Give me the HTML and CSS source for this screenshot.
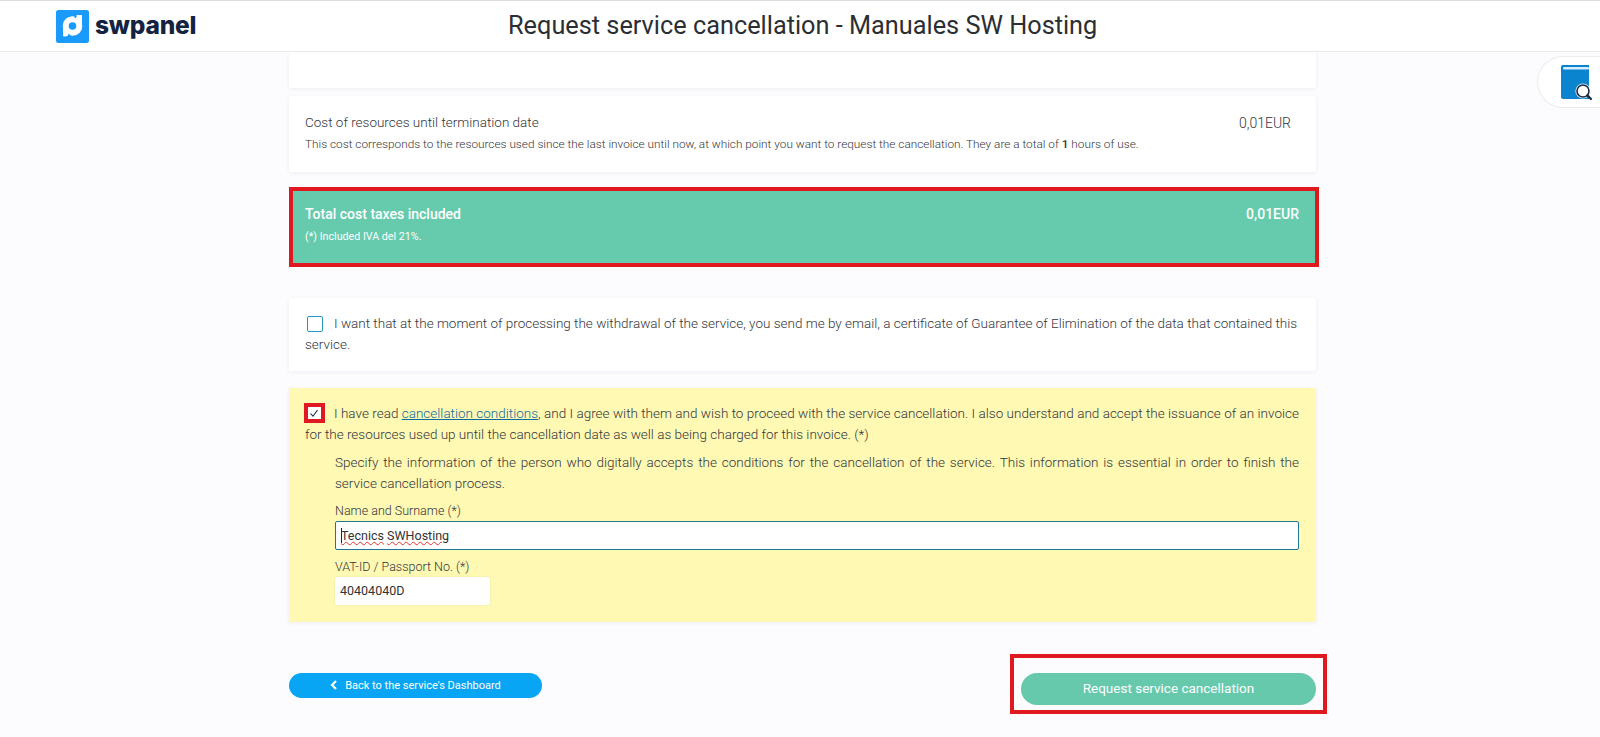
FILE: index.html
```html
<!DOCTYPE html>
<html lang="en">
<head>
<meta charset="utf-8">
<title>Request service cancellation - Manuales SW Hosting</title>
<link rel="stylesheet" href="styles.css">
</head>
<body>
<header class="topbar">
  <div class="brand">
    <svg class="brand-icon" viewBox="0 0 33 33" aria-hidden="true">
      <rect width="33" height="33" rx="2.5" fill="#1a9bfc"/>
      <circle cx="16.5" cy="16" r="9.8" fill="#fff"/>
      <path d="M20.5 5H26v11h-5.5zM7 16h5.5v11l-3.5 0-2-1z" fill="#fff"/>
      <path d="M7 27h6.2l1.8-1.8" fill="#1a9bfc"/>
      <circle cx="16.5" cy="16" r="3.8" fill="#1a9bfc"/>
      <path d="M20 5.5l-1 2.6M13.2 24l-1 3" stroke="#1a9bfc" stroke-width="1.4"/>
    </svg>
    <span class="brand-name">swpanel</span>
  </div>
  <h1 class="page-title">Request service cancellation - Manuales SW Hosting</h1>
</header>

<aside class="help-tab">
  <svg class="help-icon" viewBox="0 0 32 36" aria-hidden="true">
    <path d="M2 0h26v34H2a2 2 0 0 1-2-2V2a2 2 0 0 1 2-2z" fill="#0b84d0"/>
    <rect x="2" y="2" width="26" height="2.6" rx="1.3" fill="#d7edf9"/>
    <circle cx="22" cy="26" r="7.6" fill="#fff" opacity=".9"/>
    <circle cx="22" cy="26" r="6" fill="#fff" stroke="#1c2c3f" stroke-width="1.6"/>
    <path d="M26.4 30.4l3.6 3.6" stroke="#1c2c3f" stroke-width="2.2" stroke-linecap="round"/>
  </svg>
</aside>

<main class="content">
  <div class="card card-stub"></div>

  <section class="card cost-card">
    <div class="cost-text">
      <div class="cost-title">Cost of resources until termination date</div>
      <p class="cost-note">This cost corresponds to the resources used since the last invoice until now, at which point you want to request the cancellation. They are a total of <b class="strong">1</b> hours of use.</p>
    </div>
    <div class="cost-value">0,01EUR</div>
  </section>

  <section class="total-card">
    <div>
      <div class="total-title">Total cost taxes included</div>
      <p class="total-note">(*) Included IVA del 21%.</p>
    </div>
    <div class="total-value">0,01EUR</div>
  </section>

  <section class="card guarantee-card">
    <p class="body-text"><span class="check check-empty"></span>I want that at the moment of processing the withdrawal of the service, you send me by email, a certificate of Guarantee of Elimination of the data that contained this service.</p>
  </section>

  <section class="accept-card">
    <p class="body-text body-justify"><span class="check-mark-box"><svg class="tick" viewBox="0 0 12 12" aria-hidden="true"><path d="M2.5 6.5l2.5 2.7L9.5 3" fill="none" stroke="#16283c" stroke-width="1.1"/></svg></span>I have read <a class="link" href="#">cancellation conditions</a>, and I agree with them and wish to proceed with the service cancellation. I also understand and accept the issuance of an invoice for the resources used up until the cancellation date as well as being charged for this invoice. (*)</p>
    <div class="accept-fields">
      <p class="justify-text">Specify the information of the person who digitally accepts the conditions for the cancellation of the service. This information is essential in order to finish the service cancellation process.</p>
      <label class="field-label">Name and Surname (*)</label>
      <div class="input input-wide"><span class="caret"></span><span class="spell">Tecnics</span> <span class="spell">SWHosting</span></div>
      <label class="field-label field-label-second">VAT-ID / Passport No. (*)</label>
      <div class="input input-short">40404040D</div>
    </div>
  </section>

  <div class="actions">
    <a class="btn-back" href="#"><svg class="chev" viewBox="0 0 8 10" aria-hidden="true"><path d="M6 1L2 5l4 4" fill="none" stroke="#fff" stroke-width="2.2"/></svg>Back to the service's Dashboard</a>
    <div class="highlight-box"><a class="btn-request" href="#">Request service cancellation</a></div>
  </div>
</main>
</body>
</html>
```
FILE: styles.css
```css
* { box-sizing: border-box; }
html, body { margin: 0; height: 737px; overflow: hidden; }
body {
  background: #fcfcfe;
  font-family: Roboto, "Liberation Sans", sans-serif;
  font-weight: 300;
  color: #33363b;
  position: relative;
}
.topbar {
  height: 52px;
  background: #fff;
  border-top: 1px solid #dcdcdc;
  border-bottom: 1px solid #e9e9ee;
  display: grid;
  grid-template-columns: 1fr;
  align-items: center;
  position: relative;
}
.brand {
  position: absolute;
  left: 56px;
  top: 9px;
  display: flex;
  align-items: center;
  gap: 6px;
}
.brand-icon { width: 33px; height: 33px; display: block; }
.brand-name {
  font-family: Inter, sans-serif;
  font-weight: 800;
  font-size: 24.5px;
  color: #14233f;
  letter-spacing: -0.2px;
  margin-top: -3px;
}
.page-title {
  margin: 0 0 0 508px;
  font-size: 25.3px;
  font-weight: 400;
  color: #2b2e33;
  line-height: 44px;
  white-space: nowrap;
}
.help-tab {
  position: absolute;
  right: 0;
  top: 56px;
  width: 63px;
  height: 52px;
  background: #fff;
  border: 1px solid #ebebf0;
  border-right: 0;
  border-radius: 26px 0 0 26px;
}
.help-icon { position: absolute; left: 23px; top: 8px; width: 32px; height: 36px; }
.content {
  width: 1027px;
  margin-left: 289px;
  display: flex;
  flex-direction: column;
}
.card {
  background: #fff;
  border-radius: 2px;
  box-shadow: 0 1px 4px rgba(40, 40, 70, .07);
}
.card-stub { height: 36px; margin-bottom: 8px; }
.cost-card {
  height: 76px;
  padding: 17px 25px 0 16px;
  display: flex;
  justify-content: space-between;
  margin-bottom: 15px;
}
.cost-title { font-size: 13.5px; line-height: 18px; }
.cost-note { margin: 5px 0 0; font-size: 11.8px; line-height: 16px; }
.strong { font-weight: 500; }
.cost-value { font-size: 14px; font-weight: 300; line-height: 20px; }
.total-card {
  width: 1030px;
  height: 80px;
  background: #66cbac;
  border: 4px solid #e0181f;
  color: #fff;
  padding: 13px 16px 0 12px;
  display: flex;
  justify-content: space-between;
  margin-bottom: 31px;
}
.total-title, .total-value { font-size: 14px; font-weight: 500; line-height: 20px; }
.total-note { margin: 6px 0 0; font-size: 10.7px; line-height: 14px; font-weight: 400; }
.guarantee-card {
  height: 73px;
  padding: 15px 17px 0 16px;
  margin-bottom: 17px;
}
.body-text {
  margin: 0;
  font-size: 13.5px;
  line-height: 21px;
}
.body-justify { text-align: justify; }
.check {
  display: inline-block;
  vertical-align: -4px;
  width: 16px;
  height: 16px;
  border: 1.5px solid #2493c4;
  border-radius: 2px;
  margin: 0 11px 0 2px;
}
.check-mark-box {
  display: inline-block;
  vertical-align: -5px;
  width: 21px;
  height: 20px;
  background: #fff;
  border: 4px solid #e0181f;
  margin: 0 9px 0 -1px;
  line-height: 0;
}
.tick { width: 12px; height: 12px; display: block; margin: 0; }
.accept-card {
  height: 234px;
  background: #fff9b4;
  box-shadow: 0 1px 4px rgba(40, 40, 70, .07);
  padding: 15px 17px 0 16px;
}
.link { color: #0d6aa0; text-decoration: underline; font-weight: 300; }
.accept-fields { margin: 7px 0 0 30px; }
.justify-text {
  margin: 0;
  font-size: 13.5px;
  line-height: 21px;
  text-align: justify;
}
.field-label { display: block; font-size: 12.5px; line-height: 16px; margin: 9px 0 2px; font-weight: 300; }
.field-label-second { margin-top: 9px; }
.input {
  height: 28px;
  background: #fff;
  font-size: 12.5px;
  font-weight: 400;
  line-height: 28px;
  padding-left: 5px;
  color: #333;
  border-radius: 2px;
}
.input-wide {
  width: 964px;
  height: 29px;
  border: 1px solid #1c7797;
  line-height: 27px;
  position: relative;
}
.input-short { width: 155px; box-shadow: 0 0 2px rgba(0, 0, 0, .12); }
.caret { display: inline-block; width: 1px; height: 15px; background: #222; vertical-align: -3px; margin-right: -1px; }
.spell { text-decoration: underline wavy #d33; text-decoration-thickness: 1px; }
.actions {
  display: flex;
  justify-content: space-between;
  align-items: flex-start;
  margin-top: 32px;
  position: relative;
}
.btn-back {
  margin-top: 19px;
  width: 253px;
  height: 25px;
  background: #08a5f5;
  color: #fff;
  border-radius: 13px;
  font-size: 11px;
  font-weight: 400;
  text-decoration: none;
  display: flex;
  align-items: center;
  justify-content: center;
  gap: 7px;
}
.chev { width: 8px; height: 10px; margin-top: -2px; }
.highlight-box {
  width: 317px;
  height: 60px;
  margin-right: -11px;
  border: 4px solid #e0181f;
  padding: 15px 7px 0 7px;
}
.btn-request {
  display: flex;
  align-items: center;
  justify-content: center;
  height: 32px;
  padding-bottom: 2px;
  background: #66c9ab;
  color: #fff;
  border-radius: 16px;
  font-size: 13.5px;
  font-weight: 400;
  text-decoration: none;
}
```
